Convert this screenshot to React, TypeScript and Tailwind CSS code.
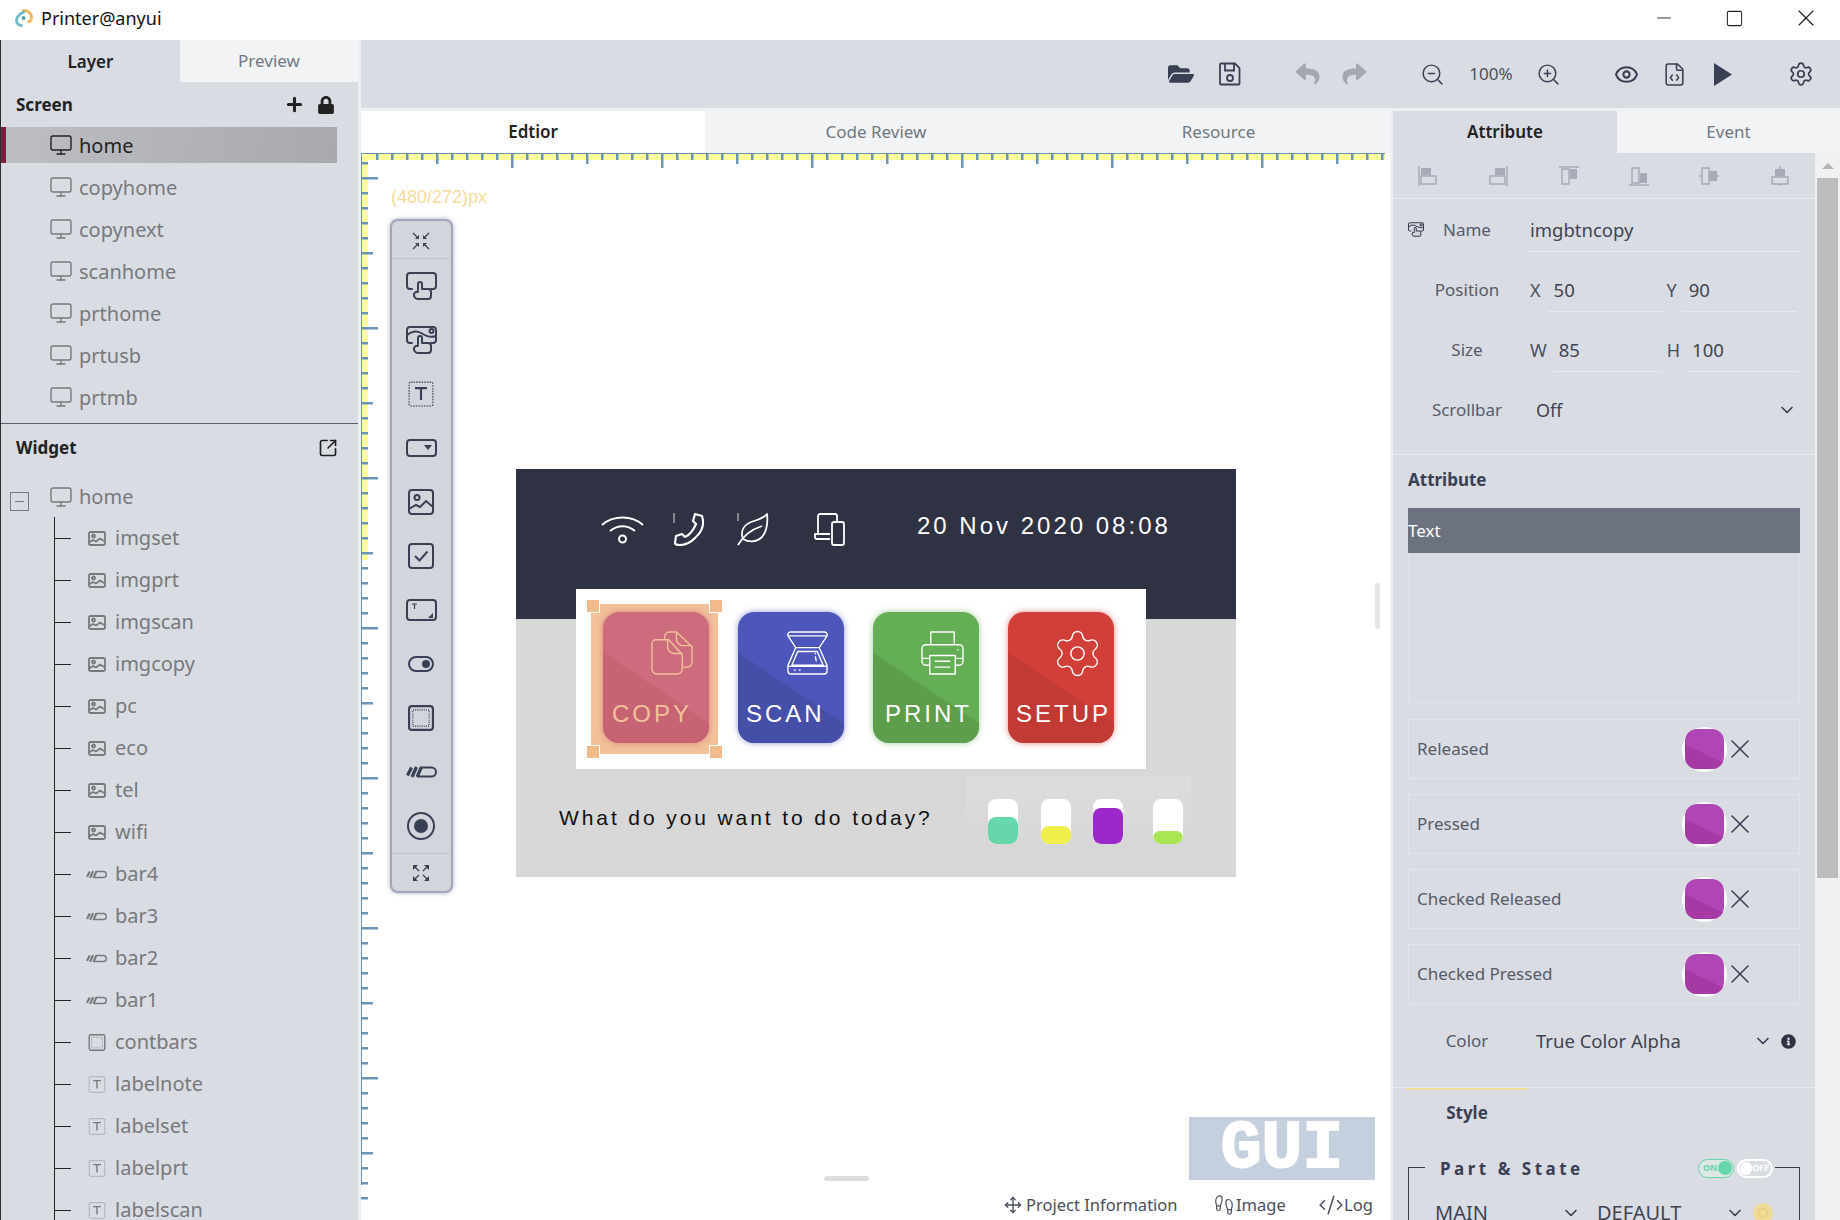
import React from 'react';
import { ZoomIn, ZoomOut, Eye, FileCode, Settings, X, ChevronDown, Move, Footprints, CodeXml, Minus, Square, SquareArrowOutUpRight, Plus, Monitor } from 'lucide-react';
import { FaReply, FaShare, FaLock, FaInfoCircle, FaFolderOpen } from 'react-icons/fa';

type P = { className?: string };

const ImgIcon = ({ className }: P) => (
  <svg className={className} viewBox="0 0 18 15" fill="none" stroke="currentColor" strokeWidth="1.800">
    <rect x="1" y="1" width="16" height="13" rx="1.500" />
    <circle cx="5.500" cy="5" r="1.500" />
    <path d="M1 11.500l4-2.500 3 1.500 4-3 5 3" />
  </svg>
);
const BarIcon = ({ className }: P) => (
  <svg className={className} viewBox="0 0 31 12" fill="none" stroke="currentColor">
    <path d="M15 1.500h10.500a4.500 4.500 0 0 1 0 9H12" strokeWidth="2" />
    <path d="M1.500 9.500L5.500 1.500M6 11L10.500 1M11 11L15.500 1" strokeWidth="3.200" />
  </svg>
);
const ContIcon = ({ className }: P) => (
  <svg className={className} viewBox="0 0 24 24" fill="none" stroke="currentColor">
    <rect x="1" y="1" width="22" height="22" rx="2.500" strokeWidth="2" />
    <rect x="4.500" y="4.500" width="15" height="15" strokeWidth="1" strokeDasharray="1 1" />
  </svg>
);
const TextIcon = ({ className }: P) => (
  <svg className={className} viewBox="0 0 24 24" fill="none" stroke="currentColor">
    <rect x="1" y="1" width="22" height="22" rx="1.500" strokeWidth="1" strokeDasharray="1.500 1" />
    <path d="M6.500 6.500h11M12 6.500v11" strokeWidth="2" />
  </svg>
);
const BtnIcon = ({ className }: P) => (
  <svg className={className} viewBox="0 0 31 28" fill="none" stroke="currentColor" strokeWidth="2" strokeLinecap="round" strokeLinejoin="round">
    <path d="M6 17H4a3 3 0 0 1-3-3V4a3 3 0 0 1 3-3h23a3 3 0 0 1 3 3v10a3 3 0 0 1-3 3h-2" />
    <path d="M12 18v-6a2 2 0 0 1 4 0v5h6a3 3 0 0 1 3 3v4a3 3 0 0 1-3 3H12a4 4 0 0 1-4-4.500c0-2 2-3 4-2.500" />
  </svg>
);
const ImgBtnIcon = ({ className }: P) => (
  <svg className={className} viewBox="0 0 31 28" fill="none" stroke="currentColor" strokeWidth="2" strokeLinecap="round" strokeLinejoin="round">
    <path d="M6 17H4a3 3 0 0 1-3-3V4a3 3 0 0 1 3-3h23a3 3 0 0 1 3 3v10a3 3 0 0 1-3 3h-2" />
    <path d="M1 9c5-4 9-5 14-2 5 3 9 5 15 3" />
    <circle cx="25.500" cy="5" r="2" />
    <path d="M12 18v-6a2 2 0 0 1 4 0v5h6a3 3 0 0 1 3 3v4a3 3 0 0 1-3 3H12a4 4 0 0 1-4-4.500c0-2 2-3 4-2.500" fill="#d2d5db" />
  </svg>
);
const DropIcon = ({ className }: P) => (
  <svg className={className} viewBox="0 0 31 18" fill="none" stroke="currentColor" strokeWidth="2">
    <rect x="1" y="1" width="29" height="16" rx="3" />
    <path d="M18 6h8l-4 5z" fill="currentColor" stroke="none" />
  </svg>
);
const PicIcon = ({ className }: P) => (
  <svg className={className} viewBox="0 0 26 26" fill="none" stroke="currentColor" strokeWidth="2">
    <rect x="1" y="1" width="24" height="24" rx="3" />
    <circle cx="9" cy="8.500" r="2.500" />
    <path d="M1 20l7-4 4 2 6-6 7 6" />
  </svg>
);
const CheckIcon = ({ className }: P) => (
  <svg className={className} viewBox="0 0 26 26" fill="none" stroke="currentColor" strokeWidth="2">
    <rect x="1" y="1" width="24" height="24" rx="3" />
    <path d="M7 13l4.500 4.500L19.500 8.500" />
  </svg>
);
const AreaIcon = ({ className }: P) => (
  <svg className={className} viewBox="0 0 31 22" fill="none" stroke="currentColor" strokeWidth="2">
    <rect x="1" y="1" width="29" height="20" rx="3" />
    <path d="M6 5h5M8.500 5v5" strokeWidth="1.200" />
    <path d="M27 14v5h-5z" fill="currentColor" stroke="none" />
  </svg>
);
const SwitchIcon = ({ className }: P) => (
  <svg className={className} viewBox="0 0 26 16" fill="none" stroke="currentColor" strokeWidth="2">
    <rect x="1" y="1" width="24" height="14" rx="7" />
    <circle cx="18" cy="8" r="4" fill="currentColor" stroke="none" />
  </svg>
);
const RadioIcon = ({ className }: P) => (
  <svg className={className} viewBox="0 0 28 28" fill="none" stroke="currentColor" strokeWidth="2">
    <circle cx="14" cy="14" r="13" />
    <circle cx="14" cy="14" r="7" fill="currentColor" stroke="none" />
  </svg>
);
const ShrinkIcon = ({ className }: P) => (
  <svg className={className} viewBox="0 0 18 18" fill="none" stroke="currentColor" strokeWidth="1.300">
    <path d="M1 1l5 5M17 1l-5 5M1 17l5-5M17 17l-5-5" />
    <path d="M7 3v4H3zM11 3v4h4zM7 15v-4H3zM11 15v-4h4z" fill="currentColor" stroke="none" />
  </svg>
);
const ExpandIcon = ({ className }: P) => (
  <svg className={className} viewBox="0 0 18 18" fill="none" stroke="currentColor" strokeWidth="1.300">
    <path d="M2 2l5 5M16 2l-5 5M2 16l5-5M16 16l-5-5" />
    <path d="M1 1h5L1 6zM17 1h-5l5 5zM1 17h5l-5-5zM17 17h-5l5-5z" fill="currentColor" stroke="none" />
  </svg>
);

const AlignIcon = ({ kind }: { kind: number }) => {
  const d = [
    <g key="0"><path d="M1 0v20" /><rect x="3" y="10" width="15" height="8" /><rect x="3" y="2" width="10" height="7" fill="currentColor" stroke="none" /></g>,
    <g key="1"><path d="M19 0v20" /><rect x="2" y="10" width="15" height="8" /><rect x="7" y="2" width="10" height="7" fill="currentColor" stroke="none" /></g>,
    <g key="2"><path d="M0 1h20" /><rect x="3" y="3" width="7" height="15" /><rect x="11" y="3" width="7" height="10" fill="currentColor" stroke="none" /></g>,
    <g key="3"><path d="M0 19h20" /><rect x="3" y="2" width="7" height="15" /><rect x="11" y="7" width="7" height="10" fill="currentColor" stroke="none" /></g>,
    <g key="4"><path d="M0 10h20" /><rect x="3" y="2" width="7" height="16" fill="#d9dce3" /><rect x="11" y="5" width="7" height="10" fill="currentColor" stroke="none" /></g>,
    <g key="5"><path d="M10 0v20" /><rect x="2" y="11" width="16" height="7" fill="#d9dce3" /><rect x="5" y="3" width="10" height="7" fill="currentColor" stroke="none" /></g>,
  ];
  return <svg className="h-5 w-5" viewBox="0 0 20 20" fill="none" stroke="currentColor" strokeWidth="1.500">{d[kind]}</svg>;
};

const ScreenRow = ({ name, active }: { name: string; active?: boolean }) => (
  <div className={active
    ? "flex h-[36px] w-[336px] items-center border-l-[5px] border-[#7b1f3a] bg-[linear-gradient(100deg,#bdbec1,#a8a9ac)] pl-[43px] text-[#222]"
    : "flex h-[36px] w-[336px] items-center pl-[48px] text-[#77797c]"}>
    <Monitor className="h-[24px] w-[24px]" strokeWidth={1.4} />
    <span className="ml-[6px] pt-[2px] text-[20px] leading-none">{name}</span>
  </div>
);

const TreeRow = ({ name, Icon, wide }: { name: string; Icon: React.ComponentType<P>; wide?: boolean }) => (
  <div className="flex h-[42px] items-center text-[#77797c]">
    <div className="h-px w-[16px] bg-[#222]" />
    <div className="ml-[17px] flex w-[27px] items-center">
      <Icon className={wide ? "h-[11px] w-[21px] -ml-[2px]" : "h-[17px] w-[18px]"} />
    </div>
    <span className="text-[20px] leading-none">{name}</span>
  </div>
);

const treeItems: [string, React.ComponentType<P>, boolean?][] = [
  ['imgset', ImgIcon], ['imgprt', ImgIcon], ['imgscan', ImgIcon], ['imgcopy', ImgIcon], ['pc', ImgIcon], ['eco', ImgIcon], ['tel', ImgIcon], ['wifi', ImgIcon],
  ['bar4', BarIcon, true], ['bar3', BarIcon, true], ['bar2', BarIcon, true], ['bar1', BarIcon, true], ['contbars', ContIcon],
  ['labelnote', TextIcon], ['labelset', TextIcon], ['labelprt', TextIcon], ['labelscan', TextIcon],
];

const Sidebar = () => (
  <aside className="flex h-[1180px] w-[358px] shrink-0 flex-col overflow-hidden border-l border-[#2e2e2e] bg-[#d9dce3]">
    <div className="flex h-[42px] shrink-0">
      <div className="flex w-[179px] items-center justify-center pt-[2px] text-[17px] font-semibold text-[#222]">Layer</div>
      <div className="flex flex-1 items-center justify-center bg-[#f2f3f5] text-[17px] text-[#6f7780]">Preview</div>
    </div>
    <div className="flex h-[45px] shrink-0 items-center pl-[15px] pr-[23px]">
      <span className="flex-1 text-[17px] font-bold text-[#222]">Screen</span>
      <Plus className="h-[21px] w-[21px] text-[#222]" strokeWidth={3.5} />
      <FaLock className="ml-[12px] h-[18px] w-[18px] text-[#222]" />
    </div>
    <div className="flex shrink-0 flex-col gap-[6px]">
      <ScreenRow name="home" active />
      {['copyhome', 'copynext', 'scanhome', 'prthome', 'prtusb', 'prtmb'].map((n) => <ScreenRow key={n} name={n} />)}
    </div>
    <div className="mt-[8px] h-px shrink-0 bg-[#5a5f6a]" />
    <div className="flex h-[47px] shrink-0 items-center pl-[15px] pr-[20px]">
      <span className="flex-1 text-[17px] font-bold text-[#222]">Widget</span>
      <SquareArrowOutUpRight className="h-[20px] w-[20px] text-[#222]" strokeWidth={2} />
    </div>
    <div className="flex h-[46px] shrink-0 items-center pt-[5px] text-[#77797c]">
      <div className="ml-[9px] mt-[16px] flex h-[19px] w-[19px] shrink-0 items-center justify-center self-start border border-[#77797c]"><div className="h-px w-[9px] bg-[#77797c]" /></div>
      <Monitor className="ml-[20px] h-[24px] w-[24px]" strokeWidth={1.4} />
      <span className="ml-[6px] text-[20px] leading-none">home</span>
    </div>
    <div className="ml-[53px] flex flex-col border-l border-[#222]">
      {treeItems.map(([n, I, w]) => <TreeRow key={n} name={n} Icon={I} wide={w} />)}
    </div>
  </aside>
);

const Toolbar = () => (
  <div className="flex h-[68px] shrink-0 items-center bg-[#d9dce3] text-[#3a4054]">
    <div className="ml-[807px] flex w-[26px] justify-center"><FaFolderOpen className="h-[24px] w-[26px]" /></div>
    <svg className="ml-[25px] h-[24px] w-[22px]" viewBox="0 0 22 24" fill="none" stroke="currentColor" strokeWidth="1.800">
      <path d="M2 1.500h14l4.500 4.500v15.500a1 1 0 0 1-1 1H2a1 1 0 0 1-1-1v-19a1 1 0 0 1 1-1z" />
      <path d="M6 1.500v7h9v-7" />
      <circle cx="11" cy="16" r="3" />
    </svg>
    <FaReply className="ml-[53px] h-[24px] w-[27px] text-[#a2a7b1]" />
    <FaShare className="ml-[20px] h-[24px] w-[27px] text-[#a2a7b1]" />
    <ZoomOut className="ml-[52px] h-[25px] w-[25px]" strokeWidth={1.4} />
    <span className="ml-[22px] w-[48px] text-center text-[17px] text-[#4a4f5c]">100%</span>
    <ZoomIn className="ml-[21px] h-[25px] w-[25px]" strokeWidth={1.4} />
    <Eye className="ml-[53px] h-[25px] w-[25px]" strokeWidth={2} />
    <FileCode className="ml-[23px] h-[25px] w-[25px]" strokeWidth={1.5} />
    <svg className="ml-[27px] h-[23px] w-[18px]" viewBox="0 0 18 23"><path d="M0 0l18 11.500L0 23z" fill="currentColor" /></svg>
    <Settings className="ml-[56px] h-[26px] w-[26px]" strokeWidth={1.6} />
  </div>
);

const rulerH = Array.from({ length: 68 }, (_, i) => 15 + i * 15);
const rulerV = Array.from({ length: 70 }, (_, i) => 9 + i * 15);

const Ruler = () => (
  <svg className="pointer-events-none absolute left-0 top-0 h-[1067px] w-[1029px]" viewBox="0 0 1029 1067">
    <rect x="0" y="0" width="1024" height="7" fill="#fdfd9d" />
    <rect x="0" y="0" width="7" height="407" fill="#fdfd9d" />
    <rect x="0" y="0" width="1024" height="1" fill="#6b95b8" />
    <rect x="0" y="0" width="1" height="1032" fill="#6b95b8" />
    {rulerH.map((x, i) => {
      const real = i % 5 === 4 ? (i % 10 === 9 ? 15 : 11) : 7;
      return <rect key={x} x={x} y="0" width="2.500" height={real} fill="#6b95b8" />;
    })}
    {rulerV.map((y, i) => {
      const w = i % 10 === 1 ? 17 : i % 10 === 6 ? 12 : 7;
      return <rect key={y} x="0" y={y} width={w} height="2.500" fill="#6b95b8" />;
    })}
  </svg>
);

const tools: [React.ComponentType<P>, string][] = [
  [BtnIcon, 'h-[28px] w-[31px]'], [ImgBtnIcon, 'h-[28px] w-[31px]'], [TextIcon, 'h-[26px] w-[26px]'], [DropIcon, 'h-[18px] w-[31px]'],
  [PicIcon, 'h-[26px] w-[26px]'], [CheckIcon, 'h-[26px] w-[26px]'], [AreaIcon, 'h-[22px] w-[31px]'], [SwitchIcon, 'h-[16px] w-[26px]'],
  [ContIcon, 'h-[26px] w-[26px]'], [BarIcon, 'h-[12px] w-[31px]'], [RadioIcon, 'h-[28px] w-[28px]'],
];

const ToolPalette = () => (
  <div className="absolute left-[29px] top-[66px] flex h-[674px] w-[63px] flex-col rounded-[8px] border-2 border-[#a3a6b8] bg-[#d2d5db] pr-[1px] text-[#3a4054] shadow-[0_0_4px_rgba(110,110,140,0.6)]">
    <div className="flex h-[38px] shrink-0 items-center justify-center border-b border-[#bfc2cb] pt-[2px]"><ShrinkIcon className="h-[18px] w-[18px]" /></div>
    <div className="flex flex-1 flex-col">
      {tools.map(([I, c], i) => <div key={i} className="flex h-[54px] items-center justify-center"><I className={c} /></div>)}
    </div>
    <div className="flex h-[38px] shrink-0 items-center justify-center border-t border-[#bfc2cb]"><ExpandIcon className="h-[18px] w-[18px]" /></div>
  </div>
);

const CopyGlyph = ({ className }: P) => (
  <svg className={className} viewBox="0 0 44 45" fill="none" stroke="currentColor" strokeWidth="1.400" strokeLinejoin="round">
    <path d="M14 8V6a5 5 0 0 1 5-5h7l16 15v16a5 5 0 0 1-5 5h-5" />
    <path d="M26 1v7a7 7 0 0 0 7 7h8" />
    <path d="M5 9h13l14 15v15a5 5 0 0 1-5 5H6a5 5 0 0 1-5-5V13a4 4 0 0 1 4-4z" />
    <path d="M17 9v7a7 7 0 0 0 7 7h8" />
  </svg>
);
const ScanGlyph = ({ className }: P) => (
  <svg className={className} viewBox="0 0 44 45" fill="none" stroke="currentColor" strokeWidth="1.400" strokeLinejoin="round">
    <path d="M5 1h34a3 3 0 0 1 3 4l-8 12H10L2 5a3 3 0 0 1 3-4z" />
    <path d="M2 5h40" />
    <path d="M10 17L2 35v6a3 3 0 0 0 3 3h34a3 3 0 0 0 3-3v-6l-8-18" />
    <path d="M12 21h20l6 14H6z" />
    <path d="M2 36h40" />
    <path d="M30 26l1 5M30 22.500l.3 1.500" />
    <path d="M8 40h2M13 40h2" />
  </svg>
);
const PrintGlyph = ({ className }: P) => (
  <svg className={className} viewBox="0 0 44 45" fill="none" stroke="currentColor" strokeWidth="1.400" strokeLinejoin="round">
    <path d="M10 14V1h24v13" />
    <path d="M9 35H5a4 4 0 0 1-4-4V18a4 4 0 0 1 4-4h34a4 4 0 0 1 4 4v13a4 4 0 0 1-4 4h-4" />
    <path d="M9 25h26v19H9z" />
    <path d="M14 31h16M14 37h16M1 28h8M35 28h8M37 19h1.500" />
  </svg>
);
const GearGlyph = (_: P) => <Settings className="-ml-[5px] -mt-[4px] h-[53px] w-[53px] max-w-none" strokeWidth={0.65} />;

const AppBtn = ({ label, Icon, base, dark, text, pos }: { label: string; Icon: React.ComponentType<P>; base: string; dark: string; text: string; pos: string }) => (
  <div className={`relative flex h-[131px] w-[106px] shrink-0 flex-col overflow-hidden rounded-[16px] ${base}`}>
    <div className={`absolute inset-0 [clip-path:polygon(0_31%,100%_85%,100%_100%,0_100%)] ${dark}`} />
    <div className={`relative ml-[48px] mt-[19px] h-[44px] w-[43px] ${text}`}><Icon className="h-full w-full" /></div>
    <span className={`relative mt-[27px] font-['Liberation_Sans',sans-serif] text-[24px] leading-none tracking-[3px] ${pos} ${text}`}>{label}</span>
  </div>
);

const Handle = ({ c }: { c: string }) => <div className={`absolute h-[14px] w-[14px] border border-white bg-[#f2b98a] ${c}`} />;

const LevelBar = ({ fill, h }: { fill: string; h: string }) => (
  <div className="flex h-[45px] w-[30px] flex-col justify-end overflow-hidden rounded-[8px] bg-white">
    <div className={`rounded-[8px] ${fill} ${h}`} />
  </div>
);

const DeviceScreen = () => (
  <div className="absolute left-[155px] top-[316px] flex h-[408px] w-[720px] flex-col bg-[linear-gradient(180deg,#d6dad5,#d7d7d7)]">
    <div className="flex h-[150px] shrink-0 items-start bg-[#2f3243] pl-[85px] pt-[45px] text-white">
      <svg className="mt-[2px] h-[28px] w-[43px]" viewBox="0 0 43 28" fill="none" stroke="currentColor" strokeWidth="2">
        <path d="M1 9C12-1 31-1 42 9" /><path d="M9 15c8-6 17-6 25 0" /><circle cx="21.500" cy="23" r="3.500" />
      </svg>
      <svg className="ml-[29px] -mt-[1px] h-[33px] w-[32px]" viewBox="0 0 32 33" fill="none" stroke="currentColor" strokeWidth="2.200" strokeLinejoin="round">
        <path d="M1 0v10" strokeWidth="0.800" />
        <path d="M22 1l7 2c3 9-1 17-7 22-4 4-9 7-15 7-3 0-5-1-5-2l1-7 6-2 3 3c5-2 8-6 11-13l-3-3z" />
      </svg>
      <svg className="ml-[32px] -mt-[1px] h-[33px] w-[32px]" viewBox="0 0 32 33" fill="none" stroke="currentColor" strokeWidth="1.800" strokeLinejoin="round">
        <path d="M1 32C7 21 16 16 25 13" />
        <path d="M30 1c-4 5-10 6-16 8C7 12 3 18 6 26c5 3 13 4 19-2 5-6 6-14 5-23z" />
        <path d="M1 0v8" strokeWidth="0.800" />
      </svg>
      <svg className="ml-[45px] -mt-[1px] h-[33px] w-[31px]" viewBox="0 0 31 33" fill="none" stroke="currentColor" strokeWidth="1.800" strokeLinejoin="round">
        <path d="M4 20V3a2 2 0 0 1 2-2h15a2 2 0 0 1 2 2v6" />
        <path d="M16 21H1v3a2 2 0 0 0 2 2h13" />
        <rect x="18" y="9" width="12" height="23" rx="2" />
      </svg>
      <span className="ml-[72px] -mt-[2px] font-['Liberation_Sans',sans-serif] text-[24px] leading-[28px] tracking-[3px]">20 Nov 2020 08:08</span>
    </div>
    <div className="absolute left-[60px] top-[120px] flex h-[180px] w-[570px] items-start gap-[29px] bg-white pl-[27px] pt-[23px]">
      <div className="absolute left-[15px] top-[15px] h-[150px] w-[127px] bg-[#f2c19a]" />
      <div className="relative rounded-[16px] shadow-[0_0_6px_rgba(205,90,110,0.6)]">
        <AppBtn label="COPY" Icon={CopyGlyph} base="bg-[#cd6c7d]" dark="bg-[#c66473]" text="text-[#f2c19a]" pos="ml-[9px]" />
      </div>
      <div className="rounded-[16px] shadow-[0_0_6px_rgba(76,86,187,0.6)]">
        <AppBtn label="SCAN" Icon={ScanGlyph} base="bg-[#4c56bb]" dark="bg-[#464fa8]" text="text-white" pos="ml-[8px]" />
      </div>
      <div className="rounded-[16px] shadow-[0_0_6px_rgba(100,174,85,0.6)]">
        <AppBtn label="PRINT" Icon={PrintGlyph} base="bg-[#64ae55]" dark="bg-[#5e9d4b]" text="text-white" pos="ml-[12px]" />
      </div>
      <div className="rounded-[16px] shadow-[0_0_6px_rgba(209,63,56,0.6)]">
        <AppBtn label="SETUP" Icon={GearGlyph} base="bg-[#d13f38]" dark="bg-[#c23a34]" text="text-white" pos="ml-[8px]" />
      </div>
      <Handle c="left-[10px] top-[10px]" />
      <Handle c="left-[133px] top-[10px]" />
      <Handle c="left-[10px] top-[156px]" />
      <Handle c="left-[133px] top-[156px]" />
    </div>
    <span className="absolute left-[43px] top-[335px] font-['Liberation_Sans',sans-serif] text-[21px] leading-[28px] tracking-[2.900px] text-[#111]">What do you want to do today?</span>
    <div className="absolute left-[450px] top-[308px] h-[70px] w-[225px] bg-[linear-gradient(180deg,#dddddd,#d7d7d7)]" />
    <div className="absolute left-[472px] top-[330px] flex items-start">
      <LevelBar fill="bg-[#66d6ab]" h="h-[27px]" />
      <div className="ml-[23px]"><LevelBar fill="bg-[#f0ef4c]" h="h-[18px]" /></div>
      <div className="ml-[22px]"><LevelBar fill="bg-[#9b28c9]" h="h-[36px]" /></div>
      <div className="ml-[30px]"><LevelBar fill="bg-[#a9e653]" h="h-[13px]" /></div>
    </div>
  </div>
);

const Canvas = () => (
  <div className="relative flex-1 overflow-hidden bg-white">
    <Ruler />
    <span className="absolute left-[30px] top-[32px] font-['Liberation_Sans',sans-serif] text-[18px] leading-[24px] text-[#f5dd9a]">(480/272)px</span>
    <ToolPalette />
    <DeviceScreen />
    <div className="absolute left-[1014px] top-[430px] h-[46px] w-[5px] rounded-full bg-[#e6e6e6]" />
    <div className="absolute left-[463px] top-[1023px] h-[5px] w-[45px] rounded-full bg-[#dddddd]" />
    <div className="absolute left-[828px] top-[964px] flex h-[63px] w-[186px] items-center justify-center bg-[#c4d0de] font-['Liberation_Mono',monospace] text-[68px] font-bold leading-none text-white [-webkit-text-stroke:2px_white]">GUI</div>
    <div className="absolute left-[643px] top-[1037px] flex h-[30px] items-center whitespace-nowrap text-[16.500px] text-[#4a4f5c]">
      <Move className="h-[18px] w-[18px]" strokeWidth={1.8} />
      <span className="ml-[4px] w-[152px]">Project Information</span>
      <Footprints className="ml-[35px] h-[22px] w-[22px]" strokeWidth={1.3} />
      <span className="ml-[1px] w-[49px]">Image</span>
      <CodeXml className="ml-[33px] h-[26px] w-[26px]" strokeWidth={1.4} />
      <span>Log</span>
    </div>
  </div>
);

const CenterColumn = () => (
  <div className="flex w-[1029px] shrink-0 flex-col">
    <div className="flex h-[42px] shrink-0 text-[17px]">
      <div className="flex w-[344px] items-center justify-center bg-white font-semibold text-[#222]">Edtior</div>
      <div className="flex w-[342px] items-center justify-center bg-[#f2f3f5] text-[#6f7780]">Code Review</div>
      <div className="flex flex-1 items-center justify-center bg-[#f2f3f5] text-[#6f7780]">Resource</div>
    </div>
    <Canvas />
  </div>
);

const Underlined = ({ label, value, className }: { label: string; value: string; className: string }) => (
  <div className="flex h-[44px] items-center">
    <span className="text-[18px] text-[#4a4f5c]">{label}</span>
    <div className={`flex h-full items-center border-b border-[#e7e9ee] text-[18.500px] text-[#3f4452] ${className}`}>{value}</div>
  </div>
);

const Label = ({ children }: { children: React.ReactNode }) => (
  <div className="w-[118px] shrink-0 text-center text-[17px] text-[#565b68]">{children}</div>
);

const ImageSlot = ({ label }: { label: string }) => (
  <div className="flex h-[60px] shrink-0 items-center border border-[#e2e5ea] pl-[8px] text-[#565b68]">
    <span className="w-[265px] text-[17px]">{label}</span>
    <div className="relative flex h-[45px] w-[45px] shrink-0 items-center justify-center rounded-full bg-white">
      <div className="relative h-[40px] w-[39px] overflow-hidden rounded-[12px] bg-[#b046b5]">
        <div className="absolute inset-0 bg-[#a53aa5] [clip-path:polygon(0_38%,100%_85%,100%_100%,0_100%)]" />
      </div>
    </div>
    <X className="-ml-[3px] h-[32px] w-[32px] shrink-0 text-[#3a4054]" strokeWidth={1.2} />
  </div>
);

const Row = ({ children, top }: { children: React.ReactNode; top: string }) => (
  <div className={`flex h-[44px] shrink-0 items-center pl-[15px] pr-[15px] ${top}`}>{children}</div>
);

const RightPanel = () => (
  <div className="flex min-w-0 flex-1 flex-col">
    <div className="flex h-[42px] shrink-0 text-[17px]">
      <div className="flex w-[224px] items-center justify-center bg-[#d9dce3] font-semibold text-[#222]">Attribute</div>
      <div className="flex flex-1 items-center justify-center bg-[#f2f3f5] text-[#6f7780]">Event</div>
    </div>
    <div className="flex flex-1 overflow-hidden">
      <div className="flex w-[422px] shrink-0 flex-col bg-[#d9dce3]">
        <div className="grid h-[46px] shrink-0 grid-cols-6 items-center justify-items-center border-b border-[#e6e8ed] text-[#a6abb7]">
          {[0, 1, 2, 3, 4, 5].map((k) => <AlignIcon key={k} kind={k} />)}
        </div>
        <Row top="mt-[9px]">
          <div className="relative w-[118px] shrink-0 text-center text-[17px] text-[#565b68]">
            <span className="absolute left-0 top-[5px] text-[#3a4054]"><ImgBtnIcon className="h-[15px] w-[16px]" /></span>
            Name
          </div>
          <div className="flex h-full flex-1 items-center border-b border-[#e7e9ee] pl-[4px] text-[18.500px] text-[#3f4452]">imgbtncopy</div>
        </Row>
        <Row top="mt-[16px]">
          <Label>Position</Label>
          <div className="ml-[4px]"><Underlined label="X" value="50" className="ml-[7px] w-[115px] pl-[6px]" /></div>
          <div className="ml-[4px]"><Underlined label="Y" value="90" className="ml-[5px] w-[115px] pl-[7px]" /></div>
        </Row>
        <Row top="mt-[16px]">
          <Label>Size</Label>
          <div className="ml-[4px]"><Underlined label="W" value="85" className="ml-[6px] w-[109px] pl-[6px]" /></div>
          <div className="ml-[5px]"><Underlined label="H" value="100" className="ml-[7px] w-[112px] pl-[5px]" /></div>
        </Row>
        <Row top="mt-[16px]">
          <Label>Scrollbar</Label>
          <span className="ml-[10px] flex-1 text-[18px] text-[#3f4452]">Off</span>
          <ChevronDown className="mr-[3px] h-[20px] w-[20px] text-[#3a4054]" strokeWidth={2} />
        </Row>
        <div className="mt-[22px] h-px shrink-0 bg-[#e6e8ed]" />
        <div className="flex h-[53px] shrink-0 items-center pb-[4px] pl-[15px] text-[17px] font-bold text-[#3a4054]">Attribute</div>
        <div className="mx-[15px] flex shrink-0 flex-col">
          <div className="flex h-[45px] shrink-0 items-center bg-[#6d7280] text-[17px] text-white">Text</div>
          <div className="h-[150px] shrink-0 border border-t-0 border-[#e0e3e8]" />
          <div className="mt-[16px] flex shrink-0 flex-col gap-[15px]">
            {['Released', 'Pressed', 'Checked Released', 'Checked Pressed'].map((l) => <ImageSlot key={l} label={l} />)}
          </div>
          <div className="mt-[15px] flex h-[44px] shrink-0 items-center">
            <Label>Color</Label>
            <span className="ml-[10px] w-[217px] text-[18.500px] text-[#3f4452]">True Color Alpha</span>
            <ChevronDown className="h-[20px] w-[20px] text-[#3a4054]" strokeWidth={2} />
            <FaInfoCircle className="ml-[8px] h-[15px] w-[15px] text-[#2f3243]" />
          </div>
        </div>
        <div className="mt-[24px] h-px shrink-0 bg-[#e6e8ed]" />
        <div className="ml-[13px] flex h-[48px] w-[122px] shrink-0 items-center justify-center border-t-2 border-[#f5dd9a] text-[17px] font-bold text-[#3a4054]">Style</div>
        <div className="relative mx-[15px] mt-[31px] h-[100px] shrink-0 border border-[#3a3f4c]">
          <div className="absolute left-[16px] top-[-12px] flex h-[24px] w-[350px] items-center bg-[#d9dce3]">
            <span className="ml-[15px] flex-1 text-[17px] font-bold leading-none tracking-[3.500px] text-[#3a4054]">Part &amp; State</span>
            <div className="flex h-[19px] w-[36px] items-center justify-between rounded-full border border-[#66d6ab] bg-[#dfe6e6] pl-[4px] pr-[1px] text-[9px] font-bold text-[#66d6ab]">ON<div className="h-[14px] w-[14px] rounded-full bg-[#66d6ab]" /></div>
            <div className="ml-[3px] mr-[2px] flex h-[19px] w-[36px] items-center justify-between rounded-full border-2 border-white pl-[1px] pr-[2px] text-[9px] font-bold text-white"><div className="h-[13px] w-[13px] rounded-full bg-white" />OFF</div>
          </div>
          <div className="mt-[25px] flex h-[40px] items-center pl-[26px]">
            <span className="w-[162px] text-[20px] text-[#3f4452]">MAIN</span>
            <span className="w-[138px] text-[20px] text-[#3f4452]">DEFAULT</span>
          </div>
          <ChevronDown className="absolute left-[152px] top-[35px] h-[20px] w-[20px] text-[#3a4054]" strokeWidth={2} />
          <ChevronDown className="absolute left-[316px] top-[35px] h-[20px] w-[20px] text-[#3a4054]" strokeWidth={2} />
          <div className="absolute left-[344px] top-[35px] flex h-[20px] w-[20px] items-center justify-center rounded-full bg-[#f0dc96]"><div className="h-[10px] w-[10px] rounded-full border border-[#e5c970]" /></div>
        </div>
      </div>
      <div className="flex flex-1 flex-col items-center bg-[#f1f1f1]">
        <div className="flex h-[25px] w-full items-center justify-center">
          <div className="h-0 w-0 border-x-[6px] border-b-[6px] border-x-transparent border-b-[#b5b5b5]" />
        </div>
        <div className="h-[700px] w-[21px] bg-[#bdbdbd]" />
      </div>
    </div>
  </div>
);

const Logo = () => (
  <svg className="h-[20px] w-[20px]" viewBox="0 0 20 20" fill="none" strokeWidth="2.800">
    <path d="M8 3a7 7 0 0 1 9.500 7c-.3 3-2.500 4-4 3.500" stroke="#edb85a" />
    <path d="M11 3.500C7 5 3 8 2.500 12c-.4 3.500 3 6 6 5.500" stroke="#6fbcc4" />
    <circle cx="9.500" cy="10" r="2" fill="#4fa8a8" />
  </svg>
);

export default function App() {
  return (
    <div className="flex h-[1220px] w-[1840px] flex-col overflow-hidden bg-white font-['Noto_Sans',sans-serif]">
      <header className="flex h-[40px] shrink-0 items-center bg-white pb-[4px] pl-[14px]">
        <Logo />
        <span className="ml-[7px] flex-1 text-[18px] text-[#111]">Printer@anyui</span>
        <Minus className="mr-[50px] h-[22px] w-[22px] text-[#222]" strokeWidth={1} />
        <Square className="mr-[48px] h-[19px] w-[19px] text-[#222]" strokeWidth={1.3} />
        <X className="mr-[20px] h-[28px] w-[28px] text-[#222]" strokeWidth={1} />
      </header>
      <div className="flex min-h-0 flex-1 overflow-hidden">
        <Sidebar />
        <div className="w-[3px] shrink-0 bg-[#eef0f3]" />
        <div className="flex min-w-0 flex-1 flex-col">
          <Toolbar />
          <div className="h-[3px] shrink-0 bg-[#eef0f3]" />
          <div className="flex min-h-0 flex-1">
            <CenterColumn />
            <div className="w-[3px] shrink-0 bg-[#eef0f3]" />
            <RightPanel />
          </div>
        </div>
      </div>
    </div>
  );
}
